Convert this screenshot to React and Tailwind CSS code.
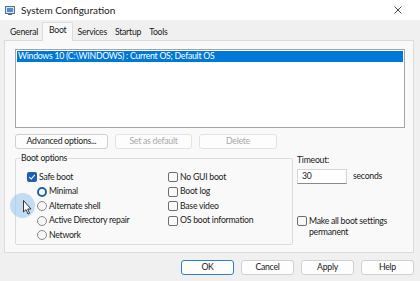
import React from "react";

const Btn = ({ children, disabled, primary, className = "" }) => (
  <div
    className={`flex items-center justify-center h-[15px] rounded-[3px] border bg-[#fdfdfd] ${
      primary ? "border-[#2f7fd0]" : disabled ? "border-[#e3e3e3]" : "border-[#d0d0d0]"
    } ${disabled ? "text-[#a8a8a8]" : "text-[#1a1a1a]"} ${className}`}
  >
    {children}
  </div>
);

const Check = ({ checked }) =>
  checked ? (
    <div className="w-[10px] h-[10px] rounded-[2px] bg-[#1f5fb0] flex items-center justify-center shrink-0">
      <svg width="8" height="8" viewBox="0 0 8 8">
        <path d="M1.3 4.2 L3.2 6 L6.8 1.8" stroke="white" strokeWidth="1.1" fill="none" />
      </svg>
    </div>
  ) : (
    <div className="w-[10px] h-[10px] rounded-[2px] border border-[#6e6e6e] bg-[#fafafa] shrink-0" />
  );

const Radio = ({ checked }) =>
  checked ? (
    <div className="w-[10px] h-[10px] rounded-full border-[2.5px] border-[#1f5fb0] bg-white" />
  ) : (
    <div className="w-[10px] h-[10px] rounded-full border border-[#8a8a8a] bg-[#f6f6f6]" />
  );

const Row = ({ control, label }) => (
  <div className="flex items-center gap-[2px] h-[14.5px]">
    {control}
    <span>{label}</span>
  </div>
);

export default function App() {
  const tabs = ["General", "Boot", "Services", "Startup", "Tools"];
  return (
    <div className="relative w-[420px] h-[281px] overflow-hidden bg-[#f0f0f0] text-[8.7px] tracking-[-0.25px] text-[#1a1a1a] font-['Lato',sans-serif] leading-none">
      {/* title bar */}
      <div className="h-[20px] bg-white flex items-center pl-[5px] pr-[18px]">
        <svg width="10" height="9" viewBox="0 0 10 9">
          <rect x="0.5" y="0.5" width="9" height="7" fill="#dde6ef" stroke="#5a6f86" />
          <rect x="2" y="2" width="6" height="4" fill="#4f8fcf" />
          <rect x="3" y="7.5" width="4" height="1.5" fill="#5a6f86" />
        </svg>
        <span className="ml-[6px] text-[10px] tracking-normal">System Configuration</span>
        <svg className="ml-auto" width="8" height="8" viewBox="0 0 8 8">
          <path d="M0.5 0.5 L7.5 7.5 M7.5 0.5 L0.5 7.5" stroke="#333" strokeWidth="0.9" />
        </svg>
      </div>

      {/* tabs */}
      <div className="flex items-end h-[20px] pl-[6px]">
        {tabs.map((t) =>
          t === "Boot" ? (
            <div
              key={t}
              className="h-[19px] px-[6px] pt-[3px] bg-[#f9f9f9] border border-b-0 border-[#dcdcdc] relative top-[1px] z-10"
            >
              {t}
            </div>
          ) : (
            <div key={t} className="h-[16px] px-[4px] flex items-center">
              {t}
            </div>
          )
        )}
      </div>

      {/* panel */}
      <div className="ml-[4px] w-[410px] h-[213px] bg-[#f9f9f9] border border-[#dcdcdc] pl-[10px] pt-[8px]">
        <div className="w-[390px] h-[79px] bg-white border border-[#a5a5a5] p-[1px]">
          <div className="h-[11px] bg-[#0078d7] text-white flex items-center pl-[1px]">
            Windows 10 (C:\WINDOWS) : Current OS; Default OS
          </div>
        </div>

        <div className="flex gap-[7px] mt-[6px]">
          <Btn className="w-[93px]">Advanced options...</Btn>
          <Btn disabled className="w-[77px]">Set as default</Btn>
          <Btn disabled className="w-[78px]">Delete</Btn>
        </div>

        <div className="flex mt-[4px]">
          {/* boot options group */}
          <div className="relative w-[278px] h-[87px] mt-[5px] border border-[#dcdcdc] rounded-[2px]">
            <span className="absolute left-[4px] top-[-5px] bg-[#f9f9f9] px-[1px]">Boot options</span>
            <div className="flex pt-[11px]">
              <div className="pl-[11px] w-[152px]">
                <Row control={<Check checked />} label="Safe boot" />
                <div className="pl-[10px]">
                  <Row control={<Radio checked />} label="Minimal" />
                  <Row control={<Radio />} label="Alternate shell" />
                  <Row control={<Radio />} label="Active Directory repair" />
                  <Row control={<Radio />} label="Network" />
                </div>
              </div>
              <div>
                <Row control={<Check />} label="No GUI boot" />
                <Row control={<Check />} label="Boot log" />
                <Row control={<Check />} label="Base video" />
                <Row control={<Check />} label="OS boot information" />
              </div>
            </div>
          </div>

          {/* timeout */}
          <div className="ml-[4px] flex flex-col">
            <span className="mt-[3px]">Timeout:</span>
            <div className="flex items-center mt-[4px]">
              <div className="w-[50px] h-[15px] bg-white border border-[#d6d6d6] border-b-[#8a8a8a] flex items-center pl-[4px]">
                30
              </div>
              <span className="ml-[6px]">seconds</span>
            </div>
            <div className="flex items-start gap-[2px] mt-[32px]">
              <Check />
              <span className="leading-[11px] -mt-[1px]">
                Make all boot settings
                <br />
                permanent
              </span>
            </div>
          </div>
        </div>
      </div>

      {/* bottom buttons */}
      <div className="flex justify-end gap-[7px] pr-[6px] mt-[7px]">
        <Btn primary className="w-[53px]">OK</Btn>
        <Btn className="w-[53px]">Cancel</Btn>
        <Btn className="w-[53px]">Apply</Btn>
        <Btn className="w-[53px]">Help</Btn>
      </div>

      {/* cursor highlight */}
      <div className="absolute left-[10px] top-[193px] w-[25px] h-[25px] rounded-full bg-[#9cc8ee] opacity-60" />
      <svg className="absolute left-[23px] top-[200px]" width="10" height="16" viewBox="0 0 10 16">
        <path d="M0.5 0.5 L0.5 12 L3 9.6 L5 14 L6.6 13.3 L4.7 9 L8 9 Z" fill="white" stroke="#222" strokeWidth="0.9" />
      </svg>
    </div>
  );
}
